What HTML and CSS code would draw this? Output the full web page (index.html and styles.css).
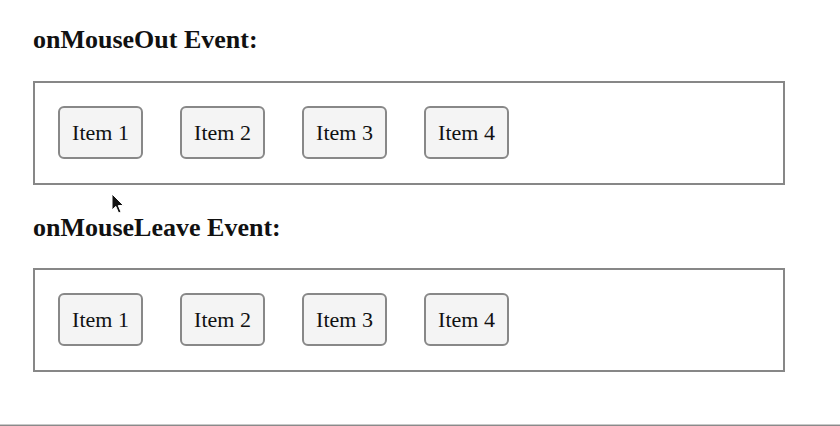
FILE: index.html
```html
<!DOCTYPE html>
<html lang="en">
<head>
    <meta charset="UTF-8">
    <meta name="viewport" content="width=device-width, initial-scale=1.0">
    <title>Mouse Events</title>
    <link rel="stylesheet" href="styles.css">
</head>
<body>
    <div class="page">
        <!-- onMouseOut demo -->
        <section class="demo">
            <h3 class="demo-title">onMouseOut Event:</h3>
            <div class="item-list">
                <div class="item">Item 1</div>
                <div class="item">Item 2</div>
                <div class="item">Item 3</div>
                <div class="item">Item 4</div>
            </div>
        </section>

        <!-- onMouseLeave demo -->
        <section class="demo">
            <h3 class="demo-title">onMouseLeave Event:</h3>
            <div class="item-list">
                <div class="item">Item 1</div>
                <div class="item">Item 2</div>
                <div class="item">Item 3</div>
                <div class="item">Item 4</div>
            </div>
        </section>

        <svg class="cursor" width="14" height="22" viewBox="0 0 14 22">
            <path d="M1 1 L1 17 L4.8 13.4 L7.6 20 L10 19 L7.3 12.6 L12.4 12.4 Z" fill="#111" stroke="#fff" stroke-width="1"/>
        </svg>
    </div>
    <div class="divider"></div>
</body>
</html>
```

FILE: styles.css
```css
* {
    margin: 0;
    padding: 0;
    box-sizing: border-box;
}

body {
    font-family: 'Liberation Serif', 'Times New Roman', serif;
    background: #fff;
    color: #111;
    width: 840px;
    height: 426px;
    overflow: hidden;
}

.page {
    position: relative;
    height: 424px;
    padding: 26px 55px 0 33px;
}

.demo {
    margin-bottom: 29px;
}

.demo-title {
    font-size: 26px;
    font-weight: 700;
    line-height: 28px;
    margin-bottom: 27px;
}

.demo + .demo .demo-title {
    margin-bottom: 26px;
}

.item-list {
    display: flex;
    gap: 37px;
    border: 2px solid #878787;
    padding: 23px 23px 24px;
}

.item {
    height: 53px;
    width: 85px;
    display: flex;
    align-items: center;
    justify-content: center;
    font-size: 22px;
    background: #f4f4f4;
    border: 2px solid #888;
    border-radius: 6px;
}

.cursor {
    position: absolute;
    left: 111px;
    top: 193px;
}

.divider {
    height: 2px;
    background: #c9c9c9;
    border-bottom: 1px solid #8a8a8a;
}
```
